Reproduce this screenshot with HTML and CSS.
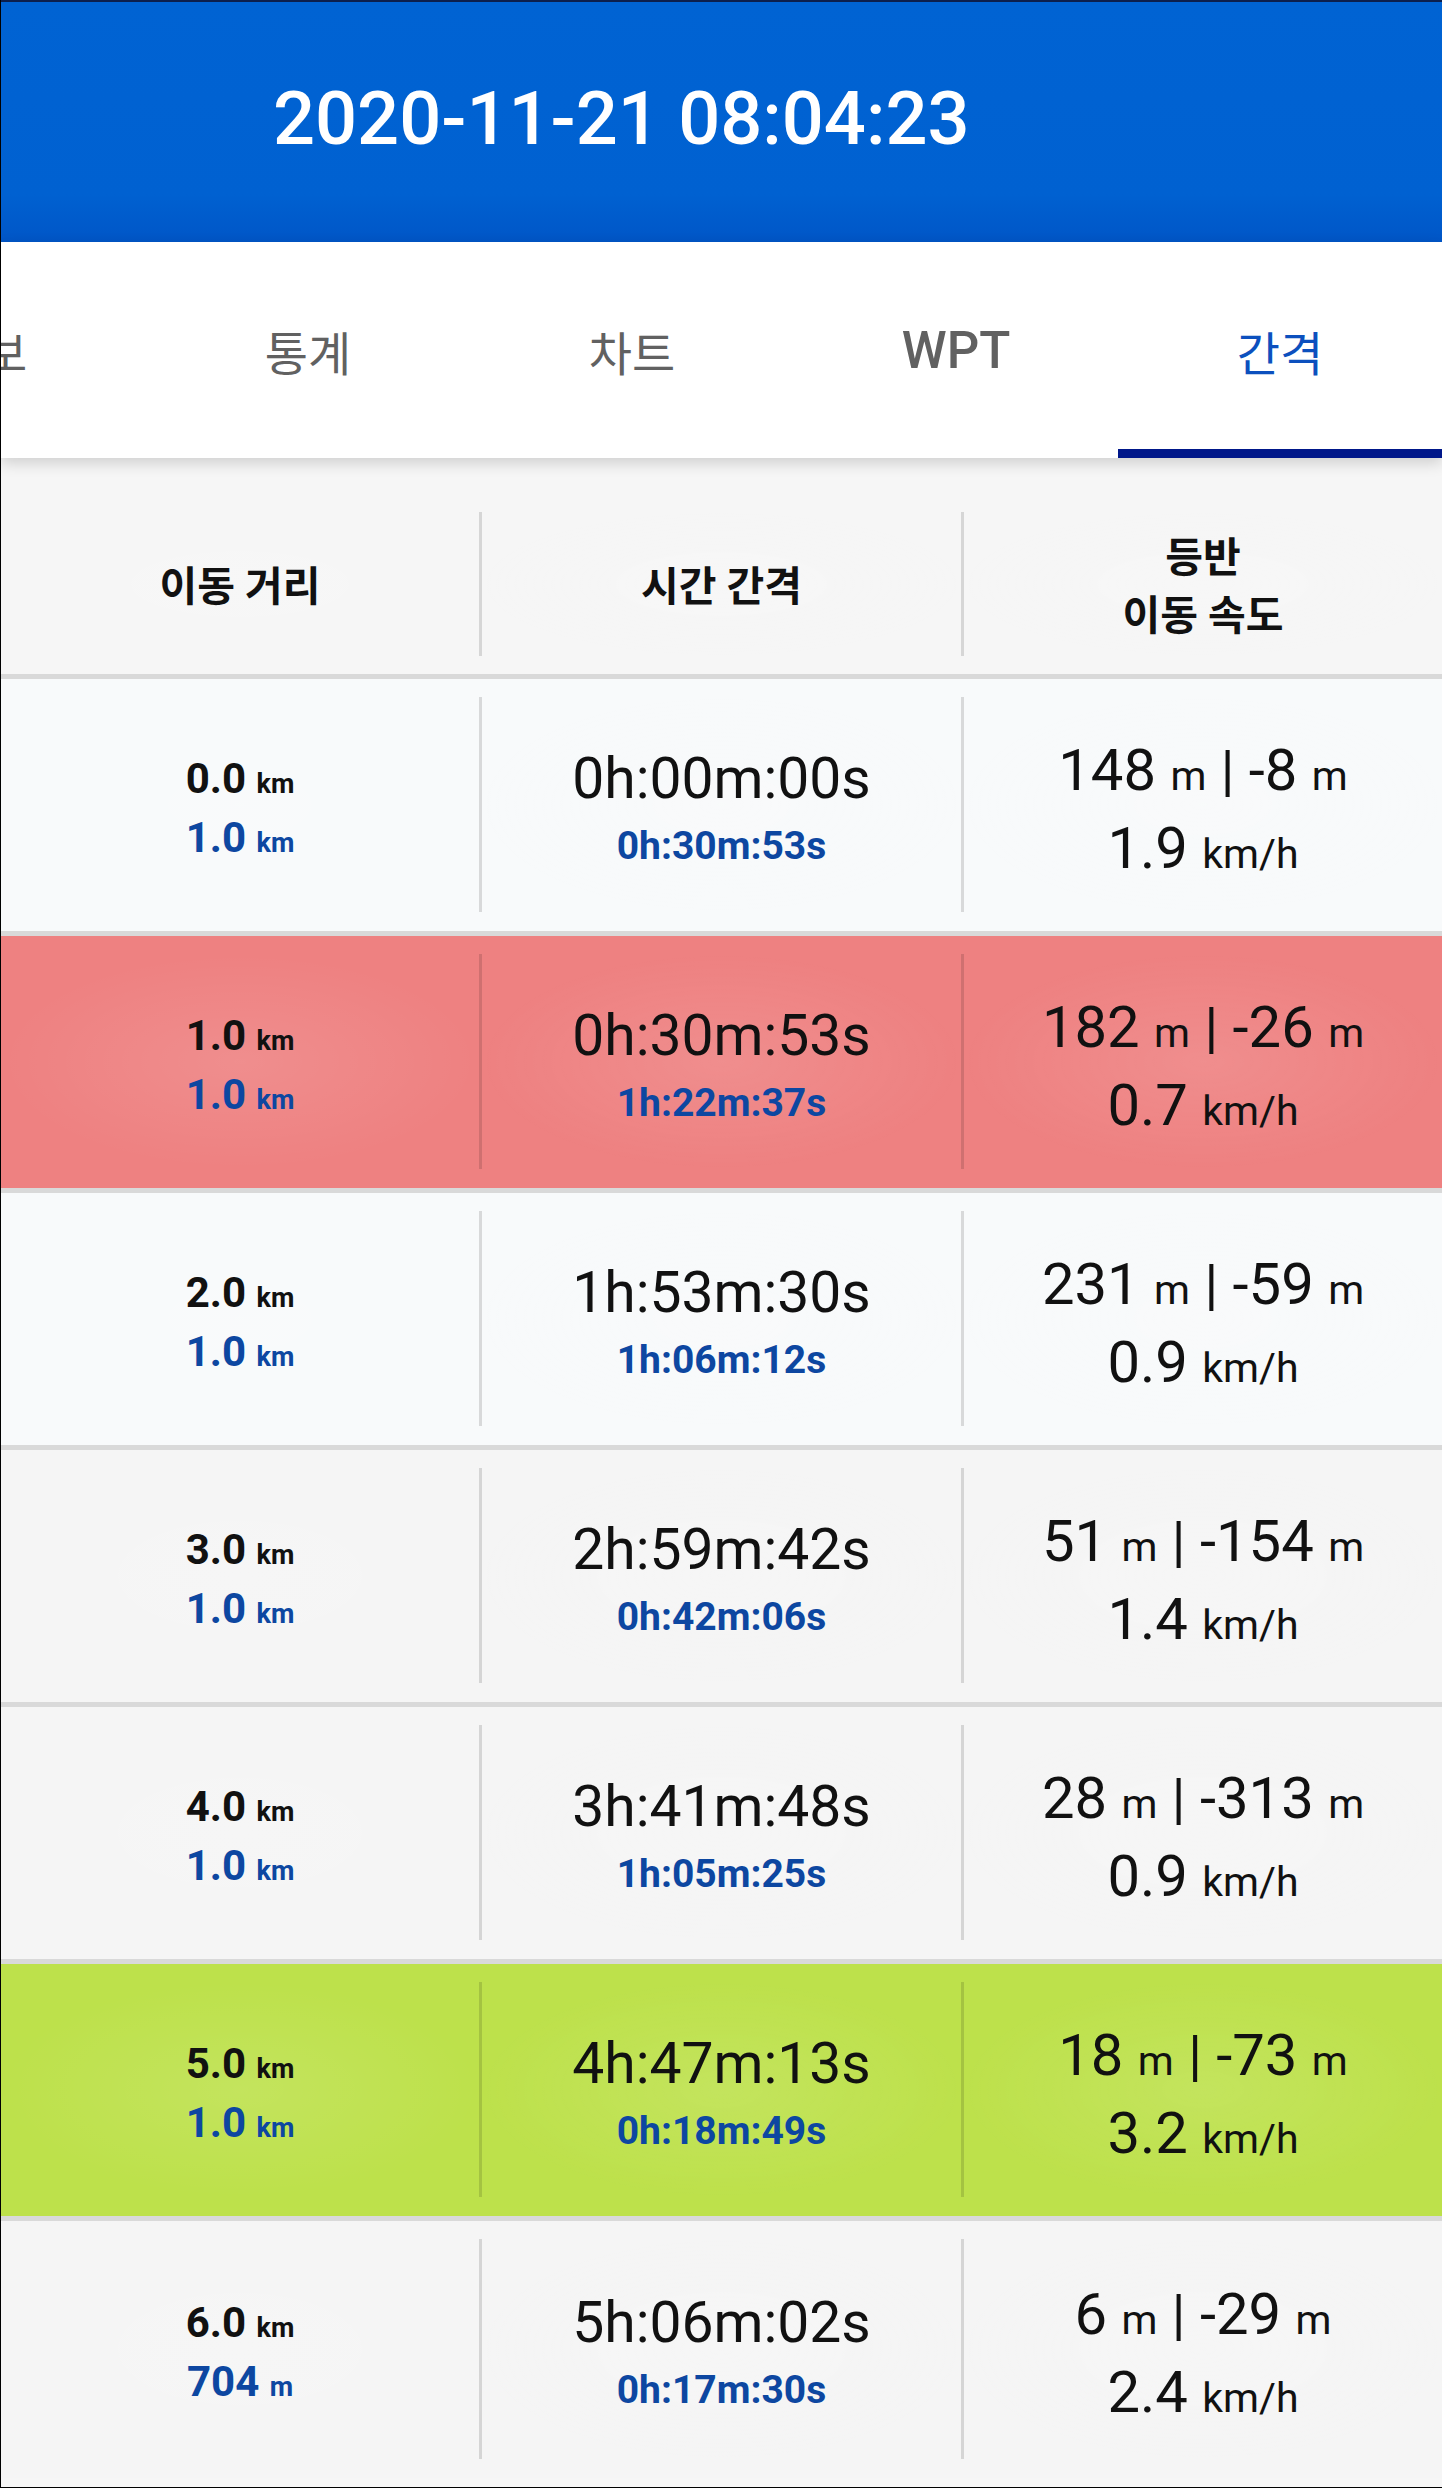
FILE: index.html
```html
<!DOCTYPE html>
<html lang="ko">
<head>
    <meta charset="UTF-8">
    <meta name="viewport" content="width=device-width, initial-scale=1.0">
    <title>간격</title>
    <link rel="stylesheet" href="styles.css">
</head>
<body>
    <div class="screen">
        <header class="appbar">
            <h1 class="title">2020-11-21 08:04:23</h1>
        </header>

        <nav class="tabs">
            <div class="tab tab-first">정보</div>
            <div class="tab">통계</div>
            <div class="tab">차트</div>
            <div class="tab tab-latin">WPT</div>
            <div class="tab active">간격</div>
        </nav>

        <div class="list">
            <div class="row head">
                <div class="cell">이동 거리</div>
                <div class="cell">시간 간격</div>
                <div class="cell">등반<br>이동 속도</div>
            </div>

            <div class="row row-light">
                <div class="cell dist">
                    <div>0.0 <span class="u">km</span></div>
                    <div class="sub">1.0 <span class="u">km</span></div>
                </div>
                <div class="cell time">
                    <div class="main">0h:00m:00s</div>
                    <div class="sub">0h:30m:53s</div>
                </div>
                <div class="cell climb">
                    <div>148 <span class="u">m</span> <span class="pipe">|</span> -8 <span class="u">m</span></div>
                    <div>1.9 <span class="u">km/h</span></div>
                </div>
            </div>

            <div class="row row-red">
                <div class="cell dist">
                    <div>1.0 <span class="u">km</span></div>
                    <div class="sub">1.0 <span class="u">km</span></div>
                </div>
                <div class="cell time">
                    <div class="main">0h:30m:53s</div>
                    <div class="sub">1h:22m:37s</div>
                </div>
                <div class="cell climb">
                    <div>182 <span class="u">m</span> <span class="pipe">|</span> -26 <span class="u">m</span></div>
                    <div>0.7 <span class="u">km/h</span></div>
                </div>
            </div>

            <div class="row row-light">
                <div class="cell dist">
                    <div>2.0 <span class="u">km</span></div>
                    <div class="sub">1.0 <span class="u">km</span></div>
                </div>
                <div class="cell time">
                    <div class="main">1h:53m:30s</div>
                    <div class="sub">1h:06m:12s</div>
                </div>
                <div class="cell climb">
                    <div>231 <span class="u">m</span> <span class="pipe">|</span> -59 <span class="u">m</span></div>
                    <div>0.9 <span class="u">km/h</span></div>
                </div>
            </div>

            <div class="row row-grey">
                <div class="cell dist">
                    <div>3.0 <span class="u">km</span></div>
                    <div class="sub">1.0 <span class="u">km</span></div>
                </div>
                <div class="cell time">
                    <div class="main">2h:59m:42s</div>
                    <div class="sub">0h:42m:06s</div>
                </div>
                <div class="cell climb">
                    <div>51 <span class="u">m</span> <span class="pipe">|</span> -154 <span class="u">m</span></div>
                    <div>1.4 <span class="u">km/h</span></div>
                </div>
            </div>

            <div class="row row-grey">
                <div class="cell dist">
                    <div>4.0 <span class="u">km</span></div>
                    <div class="sub">1.0 <span class="u">km</span></div>
                </div>
                <div class="cell time">
                    <div class="main">3h:41m:48s</div>
                    <div class="sub">1h:05m:25s</div>
                </div>
                <div class="cell climb">
                    <div>28 <span class="u">m</span> <span class="pipe">|</span> -313 <span class="u">m</span></div>
                    <div>0.9 <span class="u">km/h</span></div>
                </div>
            </div>

            <div class="row row-green">
                <div class="cell dist">
                    <div>5.0 <span class="u">km</span></div>
                    <div class="sub">1.0 <span class="u">km</span></div>
                </div>
                <div class="cell time">
                    <div class="main">4h:47m:13s</div>
                    <div class="sub">0h:18m:49s</div>
                </div>
                <div class="cell climb">
                    <div>18 <span class="u">m</span> <span class="pipe">|</span> -73 <span class="u">m</span></div>
                    <div>3.2 <span class="u">km/h</span></div>
                </div>
            </div>

            <div class="row row-grey">
                <div class="cell dist">
                    <div>6.0 <span class="u">km</span></div>
                    <div class="sub">704 <span class="u">m</span></div>
                </div>
                <div class="cell time">
                    <div class="main">5h:06m:02s</div>
                    <div class="sub">0h:17m:30s</div>
                </div>
                <div class="cell climb">
                    <div>6 <span class="u">m</span> <span class="pipe">|</span> -29 <span class="u">m</span></div>
                    <div>2.4 <span class="u">km/h</span></div>
                </div>
            </div>
        </div>
    </div>
</body>
</html>
```

FILE: styles.css
```css
* {
    box-sizing: border-box;
}
body {
    margin: 0;
    font-family: Roboto, "Noto Sans CJK KR", sans-serif;
    background-color: #f6f6f6;
    color: #111;
}
.screen {
    width: 1442px;
    height: 2488px;
    overflow: hidden;
    border-left: 1px solid #000;
    border-bottom: 1px solid #000;
    background-color: #f6f6f6;
}

/* Шапка */
.appbar {
    height: 242px;
    display: flex;
    align-items: center;
    padding-left: 272px;
    padding-bottom: 6px;
    border-top: 2px solid #0c1f4d;
    background: linear-gradient(#0063d3, #0061d1 80%, #0056c7);
}
.title {
    margin: 0;
    color: #fff;
    font-size: 74px;
    font-weight: 500;
    line-height: 1;
}

/* Вкладки */
.tabs {
    position: relative;
    z-index: 1;
    height: 216px;
    display: flex;
    background-color: #fff;
    box-shadow: 0 5px 14px rgba(0, 0, 0, 0.16);
}
.tab {
    flex: 0 0 324px;
    display: flex;
    align-items: center;
    justify-content: center;
    font-size: 47px;
    color: #616161;
}
.tab-first {
    margin-left: -179px;
}
.tab-latin {
    font-size: 51px;
    font-weight: 500;
}
.tab.active {
    color: #0c50be;
    box-shadow: inset 0 -9px 0 #00178a;
}

/* Таблица */
.list {
    padding-top: 36px;
}
.row {
    height: 257px;
    display: grid;
    grid-template-columns: 478px 482px 1fr;
    padding: 18px 0 19px;
    border-bottom: 5px solid #d9d9d9;
}
.row:last-child {
    border-bottom: none;
}
.row.head {
    height: 185px;
    padding: 18px 0;
}
.cell {
    display: flex;
    flex-direction: column;
    align-items: center;
    justify-content: center;
    text-align: center;
    background: radial-gradient(farthest-side, rgba(255, 255, 255, 0.1), rgba(255, 255, 255, 0));
}
.cell + .cell {
    border-left: 3px solid rgba(0, 0, 0, 0.13);
}
.head .cell {
    padding-top: 6px;
    font-size: 41px;
    font-weight: 700;
    line-height: 58px;
    color: #111;
}

.row-light {
    background-color: #f8fafb;
}
.row-grey {
    background-color: #f5f5f5;
}
.row-red {
    background-color: #ee8181;
}
.row-green {
    background-color: #bde14b;
}

.sub {
    color: #0d47a1;
}
.u,
.pipe {
    line-height: 1;
}

.dist {
    padding-top: 6px;
    font-size: 42px;
    font-weight: 700;
    line-height: 59px;
}
.dist .u {
    font-size: 27px;
}

.time {
    padding-top: 12px;
}
.time .main {
    font-size: 57px;
    line-height: 70px;
}
.time .sub {
    font-size: 39px;
    font-weight: 700;
    line-height: 64px;
}

.climb {
    padding-top: 8px;
    font-size: 58px;
    line-height: 78px;
}
.climb .u {
    font-size: 41px;
}
.climb .pipe {
    font-size: 56px;
}
```
